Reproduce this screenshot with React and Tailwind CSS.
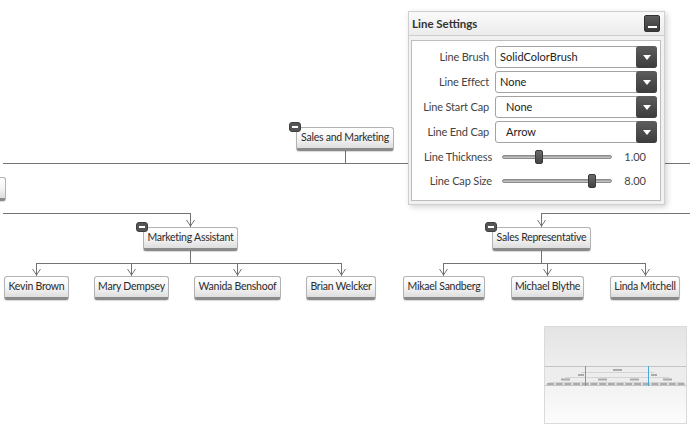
import React from "react";

const FONT = { fontFamily: 'Lato, "Open Sans", sans-serif' };

function Node({ x, y, w, label, badge }) {
  return (
    <div
      className="absolute h-[24px] rounded-[3px] border border-[#b3b3b3] border-b-[3px] border-b-[#8a8a8a] bg-gradient-to-b from-white via-[#f5f5f5] to-[#dedede] flex items-center justify-center text-[10.5px] tracking-[-0.25px] text-[#2b2b2b] whitespace-nowrap shadow-[0_1px_1px_rgba(0,0,0,0.15)]"
      style={{ left: x, top: y, width: w }}
    >
      {label}
      {badge && (
        <div className="absolute left-[-8px] top-[-6px] w-[12px] h-[10px] rounded-[3px] bg-[#555] border border-[#3f3f3f] flex items-center justify-center">
          <div className="w-[6px] h-[2px] bg-white" />
        </div>
      )}
    </div>
  );
}

function Dropdown({ value, indent }) {
  return (
    <div className="h-[22px] flex rounded-[3px] border border-[#a3a3a3] bg-white">
      <div className={`flex-1 flex items-center text-[11px] text-[#222] ${indent ? "pl-[10px]" : "pl-[4px]"}`}>{value}</div>
      <div className="w-[21px] -my-px -mr-px rounded-[3px] bg-gradient-to-b from-[#5d5d5d] to-[#3c3c3c] flex items-center justify-center">
        <svg width="8" height="5" viewBox="0 0 8 5"><path d="M0 0 L8 0 L4 5 Z" fill="#fff" /></svg>
      </div>
    </div>
  );
}

function Slider({ label, pos, value }) {
  return (
    <div className="h-[20px] flex items-center">
      <div className="w-[80px] text-right text-[11px] tracking-[-0.15px] text-[#444] whitespace-nowrap">{label}</div>
      <div className="ml-[10px] w-[110px] h-[4px] relative rounded-full bg-gradient-to-b from-[#9a9a9a] to-[#cfcfcf] border border-[#8d8d8d]">
        <div
          className="absolute top-[-6px] w-[8px] h-[14px] rounded-[2px] bg-gradient-to-b from-[#6a6a6a] to-[#444] border border-[#3a3a3a]"
          style={{ left: pos - 4 }}
        />
      </div>
      <div className="w-[34px] text-right text-[11px] text-[#444]">{value}</div>
    </div>
  );
}

function Arrow({ x, y1, y2 }) {
  return (
    <g>
      <line x1={x + 0.5} y1={y1} x2={x + 0.5} y2={y2} />
      <polyline points={`${x - 3.5},${y2 - 7} ${x + 0.5},${y2 - 1} ${x + 4.5},${y2 - 7}`} fill="none" />
    </g>
  );
}

function MiniMap() {
  const lvl4 = [];
  for (let i = 0; i < 16; i++) lvl4.push(2 + i * 8.7);
  return (
    <div className="absolute left-[544px] top-[326px] w-[143px] h-[98px] border border-[#dadada] bg-gradient-to-b from-[#e4e4e4] to-[#fcfcfc] overflow-hidden">
      <div className="absolute left-0 right-0 top-[39px] h-[20px] border-y border-[#c4c4c4] bg-[#ededed]" />
      <svg className="absolute inset-0" width="143" height="98">
        <g stroke="#c2c2c2" strokeWidth="0.6" fill="none">
          <line x1="36" y1="45.5" x2="109" y2="45.5" />
          <line x1="20" y1="50.5" x2="124" y2="50.5" />
          <line x1="4" y1="55.5" x2="139" y2="55.5" />
        </g>
        <g fill="#ababab">
          <rect x="68" y="42" width="9" height="2" />
          <rect x="33" y="47" width="6" height="2" />
          <rect x="106" y="47" width="6" height="2" />
          <rect x="16" y="51.5" width="9" height="2" />
          <rect x="53" y="51.5" width="9" height="2" />
          <rect x="85" y="51.5" width="9" height="2" />
          <rect x="118" y="51.5" width="9" height="2" />
          {lvl4.map((x, i) => (
            <rect key={i} x={x} y="56" width="7" height="2" />
          ))}
        </g>
        <rect x="40" y="39" width="1" height="20" fill="#4aa8d8" />
        <rect x="103" y="39" width="1" height="20" fill="#4aa8d8" />
      </svg>
    </div>
  );
}

const LBL = "text-right text-[11px] tracking-[-0.15px] text-[#444] whitespace-nowrap";

export default function App() {
  return (
    <div className="relative w-[690px] h-[427px] overflow-hidden bg-white" style={FONT}>
      <svg className="absolute inset-0" width="690" height="427">
        <g stroke="#737373" strokeWidth="1" fill="none">
          <line x1="3" y1="163.5" x2="690" y2="163.5" />
          <line x1="345.5" y1="151" x2="345.5" y2="163" />
          <line x1="3" y1="213.5" x2="191" y2="213.5" />
          <Arrow x={190} y1={213} y2={227} />
          <line x1="541" y1="213.5" x2="690" y2="213.5" />
          <Arrow x={541} y1={213} y2={227} />
          <line x1="190.5" y1="251" x2="190.5" y2="263" />
          <line x1="36" y1="263.5" x2="342" y2="263.5" />
          <Arrow x={36} y1={263} y2={276} />
          <Arrow x={131} y1={263} y2={276} />
          <Arrow x={237} y1={263} y2={276} />
          <Arrow x={341} y1={263} y2={276} />
          <line x1="541.5" y1="251" x2="541.5" y2="263" />
          <line x1="443" y1="263.5" x2="646" y2="263.5" />
          <Arrow x={443} y1={263} y2={276} />
          <Arrow x={547} y1={263} y2={276} />
          <Arrow x={645} y1={263} y2={276} />
        </g>
      </svg>

      <Node x={-60} y={177} w={66} label="" />
      <Node x={296} y={127} w={98} label="Sales and Marketing" badge />
      <Node x={143} y={227} w={95} label="Marketing Assistant" badge />
      <Node x={492} y={227} w={99} label="Sales Representative" badge />
      <Node x={4} y={276} w={65} label="Kevin Brown" />
      <Node x={94} y={276} w={75} label="Mary Dempsey" />
      <Node x={194} y={276} w={87} label="Wanida Benshoof" />
      <Node x={306} y={276} w={70} label="Brian Welcker" />
      <Node x={403} y={276} w={82} label="Mikael Sandberg" />
      <Node x={511} y={276} w={73} label="Michael Blythe" />
      <Node x={610} y={276} w={70} label="Linda Mitchell" />

      {/* Line settings panel */}
      <div className="absolute left-[408px] top-[11px] w-[257px] h-[194px] border border-[#cfcfcf] bg-[#f1f1f1] shadow-[2px_2px_6px_rgba(0,0,0,0.18)] flex flex-col">
        <div className="h-[24px] shrink-0 flex items-center justify-between pl-[3px] pr-[4px] border-b border-[#cdcdcd] bg-gradient-to-b from-[#fafafa] to-[#ececec]">
          <span className="text-[11.5px] font-bold text-[#333]">Line Settings</span>
          <div className="w-[16px] h-[17px] rounded-[2px] bg-gradient-to-b from-[#5e5e5e] to-[#3a3a3a] border border-[#333] flex items-end justify-center pb-[3px]">
            <div className="w-[9px] h-[2px] bg-white" />
          </div>
        </div>
        <div className="mt-[4px] ml-[2px] w-[250px] h-[161px] border border-[#bdbdbd] bg-white pt-[5px]">
          <div className="grid grid-cols-[77px_162px] gap-x-[6px] gap-y-[3px] items-center">
            <div className={LBL}>Line Brush</div>
            <Dropdown value="SolidColorBrush" />
            <div className={LBL}>Line Effect</div>
            <Dropdown value="None" />
            <div className={LBL}>Line Start Cap</div>
            <Dropdown value="None" indent />
            <div className={LBL}>Line End Cap</div>
            <Dropdown value="Arrow" indent />
          </div>
          <div className="mt-[4px] flex flex-col gap-[4px]">
            <Slider label="Line Thickness" pos={36} value="1.00" />
            <Slider label="Line Cap Size" pos={89} value="8.00" />
          </div>
        </div>
      </div>

      <MiniMap />
    </div>
  );
}
